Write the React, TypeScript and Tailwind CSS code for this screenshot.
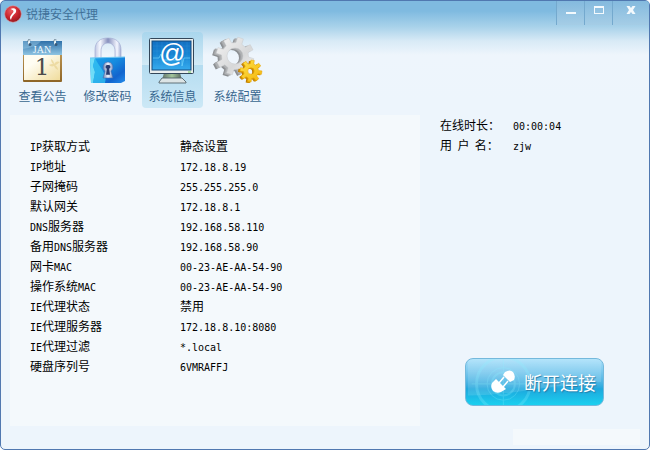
import { useState } from "react";
import type { ReactNode } from "react";
import clsx from "clsx";

const infoRows = [
  { label: "IP获取方式", value: "静态设置" },
  { label: "IP地址", value: "172.18.8.19" },
  { label: "子网掩码", value: "255.255.255.0" },
  { label: "默认网关", value: "172.18.8.1" },
  { label: "DNS服务器", value: "192.168.58.110" },
  { label: "备用DNS服务器", value: "192.168.58.90" },
  { label: "网卡MAC", value: "00-23-AE-AA-54-90" },
  { label: "操作系统MAC", value: "00-23-AE-AA-54-90" },
  { label: "IE代理状态", value: "禁用" },
  { label: "IE代理服务器", value: "172.18.8.10:8080" },
  { label: "IE代理过滤", value: "*.local" },
  { label: "硬盘序列号", value: "6VMRAFFJ" },
];

// Latin runs are set in a half-width mono face next to the full-width characters
const Mixed = ({ text }: { text: string }) => (
  <>
    {text.split(/([\x21-\x7e]+)/).map((part, i) =>
      /^[\x21-\x7e]+$/.test(part) ? (
        <span key={i} className="font-['DejaVu_Sans_Mono',monospace] text-[10px] leading-none">
          {part}
        </span>
      ) : (
        part
      )
    )}
  </>
);

const gearPath = (cx: number, cy: number, outer: number, inner: number, hole: number, teeth: number, turn = 0) => {
  const step = (Math.PI * 2) / teeth;
  const at = (r: number, a: number) => `${(cx + r * Math.cos(a)).toFixed(2)} ${(cy + r * Math.sin(a)).toFixed(2)}`;
  const points: string[] = [];
  for (let i = 0; i < teeth; i++) {
    const a = i * step + turn;
    points.push(at(inner, a - step * 0.29), at(outer, a - step * 0.2), at(outer, a + step * 0.2), at(inner, a + step * 0.29));
  }
  return `M${points.join("L")}ZM${cx - hole} ${cy}a${hole} ${hole} 0 1 0 ${hole * 2} 0a${hole} ${hole} 0 1 0 ${-hole * 2} 0Z`;
};

const bigGear = gearPath(0, 0, 19, 13.5, 8, 8, 0.3);
const smallGear = gearPath(0, 0, 11, 7.5, 3.2, 8, 0.15);

const CalendarIcon = () => (
  <svg viewBox="0 0 61 48" className="h-12 w-full" aria-hidden="true">
    <defs>
      <linearGradient id="calPage" x1="0" y1="0" x2="1" y2="1">
        <stop offset="0.3" stopColor="#fffdf3" />
        <stop offset="1" stopColor="#f0dc9c" />
      </linearGradient>
      <linearGradient id="calTop" x1="0" y1="0" x2="0" y2="1">
        <stop offset="0" stopColor="#2f70a9" />
        <stop offset="1" stopColor="#8fc4e2" />
      </linearGradient>
      <linearGradient id="calEdge" x1="0" y1="0" x2="0" y2="1">
        <stop offset="0" stopColor="#cda764" />
        <stop offset="1" stopColor="#8e6527" />
      </linearGradient>
    </defs>
    <rect x="11" y="6" width="39" height="40" rx="1" fill="url(#calEdge)" />
    <path d="M12 18H48V44H12Z" fill="url(#calPage)" />
    <path d="M11 5H50V19H11Z" fill="url(#calTop)" />
    <path d="M11 5H29C25 10 18 12 11 13Z" fill="#9ccbe6" opacity="0.45" />
    <path d="M39 23c2 1 3 3 3 5c2-3 4-3 6-2c-2 1-3 3-5 3c2 1 3 3 3 5c-2-1-3-2-4-4c-2 1-4 0-5-1c1-1 3-1 4-1c-1-1-2-3-2-5Z" fill="#ead698" opacity="0.8" />
    <text x="30" y="17" textAnchor="middle" className="font-['Liberation_Serif',serif] text-[10px]" fill="#eef9ff">JAN</text>
    <text x="30" y="39" textAnchor="middle" className="font-['DejaVu_Serif',serif] text-[23px]" fill="#4c4b4a">1</text>
    <g fill="none" stroke="#e5f1f7" strokeWidth="2" strokeLinecap="round">
      <path d="M17 8V4" />
      <path d="M43 8V4" />
    </g>
    <g fill="#365a7b">
      <circle cx="18" cy="8.500" r="1.5" />
      <circle cx="44" cy="8.500" r="1.5" />
    </g>
    <path d="M15.500 6Q16 2 18.500 4M41.500 6Q42 2 44.500 4" fill="none" stroke="#5b7387" strokeWidth="0.8" />
  </svg>
);

const LockIcon = () => (
  <svg viewBox="0 0 61 48" className="h-12 w-full" aria-hidden="true">
    <defs>
      <linearGradient id="lockBody" x1="0" y1="0" x2="1" y2="1">
        <stop offset="0" stopColor="#19a3ed" />
        <stop offset="0.45" stopColor="#168bdf" />
        <stop offset="0.75" stopColor="#1264ce" />
        <stop offset="1" stopColor="#258cea" />
      </linearGradient>
      <linearGradient id="lockShackle" x1="0" y1="0" x2="1" y2="0">
        <stop offset="0" stopColor="#bfc6e3" />
        <stop offset="0.2" stopColor="#f7f9ff" />
        <stop offset="0.5" stopColor="#8790bd" />
        <stop offset="0.85" stopColor="#f4f6ff" />
        <stop offset="1" stopColor="#a5afd4" />
      </linearGradient>
      <linearGradient id="keyPlate" x1="0" y1="0" x2="1" y2="0">
        <stop offset="0" stopColor="#6e83b2" />
        <stop offset="0.5" stopColor="#eef3fc" />
        <stop offset="1" stopColor="#7f98c7" />
      </linearGradient>
    </defs>
    <path d="M18 23V14C18 6 23 2 31 2S44 6 44 14V23H38V15C38 10 35 7 31 7S24 10 24 15V23Z" fill="url(#lockShackle)" stroke="#a4aed2" strokeWidth="0.7" />
    <path d="M13 22L48 21V45L44 47H14Z" fill="url(#lockBody)" />
    <path d="M13 22H18L16 30L18 36L16 47H14Z" fill="#6fdcf7" />
    <path d="M18 22C22 31 31 38 28 47H16L18 36L16 30Z" fill="#35c3f2" opacity="0.75" />
    <path d="M13 22L48 21" stroke="#71c7f2" strokeWidth="1" />
    <path d="M31 26a5 5 0 0 1 3 9l2 7H26l2-7a5 5 0 0 1 3-9Z" fill="url(#keyPlate)" stroke="#3c69b2" strokeWidth="0.6" />
    <path d="M31 29a2 2 0 0 1 1.2 3.8l.8 6h-4l.8-6A2 2 0 0 1 31 29Z" fill="#293c70" />
  </svg>
);

const MonitorIcon = () => (
  <svg viewBox="0 0 61 48" className="h-12 w-full" aria-hidden="true">
    <defs>
      <linearGradient id="screen" x1="0" y1="0" x2="0" y2="1">
        <stop offset="0" stopColor="#126fc2" />
        <stop offset="0.5" stopColor="#1786d4" />
        <stop offset="1" stopColor="#35abee" />
      </linearGradient>
      <linearGradient id="stand" x1="0" y1="0" x2="1" y2="0">
        <stop offset="0" stopColor="#62716b" />
        <stop offset="0.5" stopColor="#a2c59c" />
        <stop offset="1" stopColor="#58665f" />
      </linearGradient>
    </defs>
    <path d="M22 37H38L40 44H20Z" fill="url(#stand)" />
    <path d="M20 42H40L44 46V47H17V46Z" fill="#dce4e5" stroke="#53646c" strokeWidth="0.9" />
    <rect x="7.5" y="2.5" width="44" height="35" rx="1" fill="#e9eeee" stroke="#33475a" />
    <rect x="10" y="5" width="39" height="29" fill="url(#screen)" stroke="#154a7e" />
    <path d="M15 6V33M20 6V33M25 6V33M30 6V33M35 6V33M40 6V33M45 6V33M11 10H48M11 15H48M11 20H48M11 25H48M11 30H48" stroke="#4aaae5" strokeWidth="0.5" opacity="0.4" />
    <path d="M11 22H17L19 18L21 24H38L40 19V30L42 22H48" fill="none" stroke="#78daff" strokeWidth="0.8" opacity="0.8" />
    <text x="30" y="26" textAnchor="middle" className="font-['Liberation_Sans',sans-serif] text-[26px] italic" fill="#fff">@</text>
    <path d="M46 36H49" stroke="#6bcd55" />
  </svg>
);

const GearsIcon = () => (
  <svg viewBox="0 0 61 48" className="h-12 w-full" aria-hidden="true">
    <defs>
      <linearGradient id="steel" x1="0" y1="0" x2="1" y2="1">
        <stop offset="0" stopColor="#f4f4f4" />
        <stop offset="0.6" stopColor="#d7d8d9" />
        <stop offset="1" stopColor="#f3f3f3" />
      </linearGradient>
      <linearGradient id="gold" x1="0" y1="0" x2="1" y2="1">
        <stop offset="0" stopColor="#ffe24a" />
        <stop offset="1" stopColor="#f3b40b" />
      </linearGradient>
    </defs>
    <g fillRule="evenodd">
      <path d={bigGear} transform="translate(24 22)" fill="#8b8e91" />
      <path d={bigGear} transform="translate(25 21)" fill="#9b9da0" />
      <path d={bigGear} transform="translate(26 21)" fill="#afb1b3" />
      <path d={bigGear} transform="translate(28 20)" fill="url(#steel)" stroke="#c6c8ca" strokeWidth="0.5" />
      <path d={smallGear} transform="translate(42 36)" fill="#ba7900" />
      <path d={smallGear} transform="translate(43 36)" fill="#d39300" />
      <path d={smallGear} transform="translate(44 35)" fill="url(#gold)" stroke="#e4a307" strokeWidth="0.5" />
    </g>
  </svg>
);

const tabs: { id: string; label: string; icon: ReactNode }[] = [
  { id: "notice", label: "查看公告", icon: <CalendarIcon /> },
  { id: "password", label: "修改密码", icon: <LockIcon /> },
  { id: "info", label: "系统信息", icon: <MonitorIcon /> },
  { id: "config", label: "系统配置", icon: <GearsIcon /> },
];

const Logo = () => (
  <svg viewBox="0 0 18 18" className="size-[18px]" aria-hidden="true">
    <defs>
      <radialGradient id="logoRed" cx="0.4" cy="0.3" r="0.7">
        <stop offset="0" stopColor="#ec5d61" />
        <stop offset="0.6" stopColor="#c9252d" />
        <stop offset="1" stopColor="#971820" />
      </radialGradient>
    </defs>
    <circle cx="9" cy="9" r="8.300" fill="url(#logoRed)" stroke="#d99aa0" strokeWidth="0.6" />
    <path d="M6.500 4C10 2 13 4 12 7C11 9 8 10 7 15C4 11 9 9 9.500 6.500C9.500 5 8 4.500 6.500 4Z" fill="#fff" />
  </svg>
);

const TitleBar = () => (
  <header className="flex h-[27px] items-start justify-between">
    <div className="flex h-[26px] items-center gap-1 pl-[3px]">
      <Logo />
      <h1 className="text-xs text-[#3f7098]">锐捷安全代理</h1>
    </div>
    <div className="flex h-6 [&>button]:flex [&>button]:justify-center [&>button]:border-l [&>button]:border-[#74a9ce] [&>button]:bg-linear-to-b [&>button]:from-[#84bade] [&>button]:to-[#a5cde6] [&>button]:pt-[3px]">
      <button type="button" aria-label="最小化" className="w-7">
        <svg viewBox="0 0 12 12" className="size-3">
          <path d="M1 8H11V10H1Z" fill="#f3f9fd" />
        </svg>
      </button>
      <button type="button" aria-label="最大化" className="w-7">
        <svg viewBox="0 0 12 12" className="size-3">
          <path d="M1 2H11V10H1ZM2 4V9H10V4Z" fill="#f3f9fd" fillRule="evenodd" />
        </svg>
      </button>
      <button type="button" aria-label="关闭" className="w-[37px] rounded-tr-[3px]">
        <svg viewBox="0 0 12 12" className="size-3">
          <path d="M1.500 2H4.500L6 4L7.500 2H10.500L8 6L10.500 10H7.500L6 8L4.500 10H1.500L4 6Z" fill="#f3f9fd" />
        </svg>
      </button>
    </div>
  </header>
);

const DisconnectButton = () => (
  <button
    type="button"
    className="relative flex h-12 w-[139px] items-center overflow-hidden rounded-lg border border-[#74b9dc] bg-linear-to-b from-[#a9e0fa] via-[#1ea8dd] via-65% to-[#1bd0ef] pl-6 text-white"
  >
    <svg viewBox="0 0 139 48" className="absolute inset-0 size-full" aria-hidden="true">
      <path d="M0 0H139V24C90 26 50 38 0 38Z" fill="#fff" opacity="0.13" />
      <g fill="none" stroke="#8df0ff" opacity="0.25">
        <circle cx="37" cy="26" r="28" strokeWidth="3" />
        <circle cx="37" cy="26" r="17" strokeWidth="1" />
        <circle cx="37" cy="26" r="12" strokeWidth="2" />
        <path d="M37 0V48M4 26H72" strokeWidth="1" />
      </g>
    </svg>
    <svg viewBox="0 0 26 26" className="relative size-[26px]" aria-hidden="true">
      <g fill="#fff">
        <path d="M2 14L6 10L16 20L11 23Q7 25 3 22Q0 18 2 14Z" />
        <path d="M13 6L15 3Q20 0 23 3Q26 7 24 11L20 13Z" />
      </g>
      <path d="M9 14L14 8M13 18L18 12" stroke="#fff" strokeWidth="1.5" />
    </svg>
    <span className="relative ml-2 whitespace-nowrap text-lg leading-6 [text-shadow:1px_1px_1px_#257da9]">断开连接</span>
  </button>
);

export default function App() {
  const [active, setActive] = useState("info");

  return (
    <div className="flex min-h-screen flex-col rounded-[5px] border border-[#5078b0] bg-[linear-gradient(to_bottom,#7fbae0_10px,#a9d2ea_26px,#d8eaf6_40px,#eef5fc_54px,#edf5fc_100px)] font-['Noto_Sans_CJK_SC',sans-serif] text-xs text-black">
      <TitleBar />

      <nav className="flex gap-1 pt-1 pl-[11px]">
        {tabs.map((tab) => (
          <button
            key={tab.id}
            type="button"
            aria-pressed={active === tab.id}
            onClick={() => setActive(tab.id)}
            className={clsx(
              "w-[61px] rounded-[4px] py-1 text-[#38678f]",
              active === tab.id && "bg-[linear-gradient(to_bottom,#a9d6ed,#d2eaf6_43%,#b4dcf0_43%,#cce8f6)]"
            )}
          >
            {tab.icon}
            <span className="mt-1 block leading-4">{tab.label}</span>
          </button>
        ))}
      </nav>

      <main className="mt-[7px] flex flex-1">
        <section className="ml-[9px] flex-1 bg-[#f4f9fc] px-5 pt-[21px] pb-[50px]">
          <table className="w-full text-left">
            <tbody>
              {infoRows.map((row) => (
                <tr key={row.label} className="h-5 leading-[18px]">
                  <th scope="row" className="w-[150px] p-0 font-normal">
                    <Mixed text={row.label} />
                  </th>
                  <td className="p-0">
                    <Mixed text={row.value} />
                  </td>
                </tr>
              ))}
            </tbody>
          </table>
        </section>

        <aside className="flex w-[229px] flex-col justify-between pb-5 pl-5">
          <dl className="grid grid-cols-[73px_1fr] leading-5">
            <dt>在线时长：</dt>
            <dd>
              <Mixed text="00:00:04" />
            </dd>
            <dt className="whitespace-pre">用  户  名：</dt>
            <dd>
              <Mixed text="zjw" />
            </dd>
          </dl>
          <div className="pl-[25px]">
            <DisconnectButton />
          </div>
        </aside>
      </main>

      <footer className="flex justify-end pt-[3px] pr-[9px] pb-1">
        <div className="h-4 w-[127px] bg-[#f4f9fc]" />
      </footer>
    </div>
  );
}
